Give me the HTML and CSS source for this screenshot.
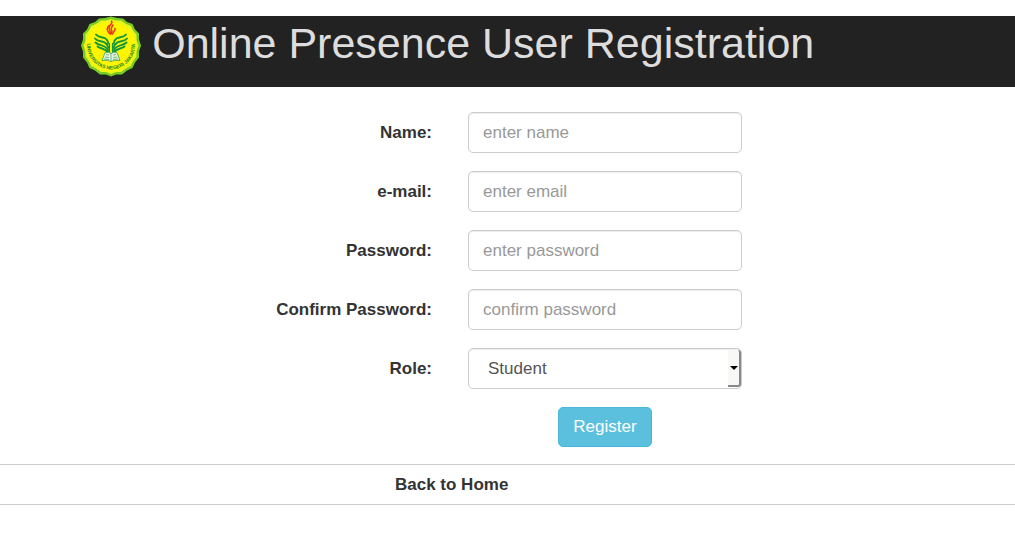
FILE: index.html
```html
<!DOCTYPE html>
<html lang="en">
<head>
<meta charset="utf-8">
<title>Online Presence User Registration</title>
<link rel="stylesheet" href="styles.css">
</head>
<body>
<header class="banner">
  <svg class="logo" viewBox="0 0 60 60" role="img" aria-label="Universitas Negeri Jakarta">
    <path d="M30 0 36 1.500 42 2 46 5.500 51.500 7.500 54 13 58 17 58 23 60 29 58 35 58 41 54 46 51.500 51.500 46 54 41 58 35 58 30 60 25 58 19 58 14 54 8.500 51.500 6 46 2 41 2 35 0 29 2 23 2 17 6 13 8.500 7.500 14 5.500 18 2 24 1.500Z" fill="#79cf25"/>
    <path d="M30 2 35 3.500 40 3.500 45 7 50 9 52.500 14 56 18 56 24 58 29 56 35 56 40 52.500 45 50 50 45 52.500 40 56 35 56 30 58 25 56 20 56 15 52.500 10 50 7.500 45 4 40 4 35 2 29 4 24 4 18 7.500 14 10 9 15 7 20 3.500 25 3.500Z" fill="#e6f51c" stroke="#55b51e" stroke-width=".6"/>
    <circle cx="30" cy="30" r="25" fill="#fff500"/>
    <g fill="none" stroke="#e9321c" stroke-width="1.500" stroke-linecap="round">
      <path d="M30.500 4.500c2 3-3 4-2.500 7 .2 2 1.500 3 1.500 6"/>
      <path d="M28 9c-3 3-2 5 .5 8"/>
      <path d="M32 8.500c-2 3-2.500 4-1 6 0 1-.5 2-1 3"/>
      <path d="M34 12c.5 2-1.500 3-2.500 5.500"/>
    </g>
    <g fill="none" stroke="#12983c" stroke-width="1.900" stroke-linecap="round">
      <path d="M15 18c4 5 10 0 12.500 9M14 22c4 5 10 0 13.500 9M14.500 26c4 4 9 1 13 8M16.500 30c4 3 7 1 10.500 6"/>
      <path d="M45 18c-4 5-10 0-12.500 9M46 22c-4 5-10 0-13.500 9M45.500 26c-4 4-9 1-13 8M43.500 30c-4 3-7 1-10.500 6"/>
      <path d="M28.500 27v9M31.500 27v9" stroke-width="1.100"/>
    </g>
    <path d="M24 36q4-1 6 1 2-2 6-1l3 8q-6-1-9 1-3-2-9-1Z" fill="#e4f5df" stroke="#27914f" stroke-width=".7"/>
    <path d="M30 37v8M25 38l3 .5M24 40.500l4 .5M35 38l-3 .5M36 40.500l-4 .5M23 42.500l5 .5M37 42.500l-5 .5" stroke="#27914f" stroke-width=".6"/>
    <path id="logo-arc" d="M6.500 24A24 24 0 1 0 53.500 24" fill="none"/>
    <text class="logo-text"><textPath href="#logo-arc" startOffset="50%">UNIVERSITAS NEGERI JAKARTA</textPath></text>
  </svg>
  <h1 class="title">Online Presence User Registration</h1>
</header>
<main>
  <form class="form">
    <label class="label" for="name">Name:</label>
    <input class="control" id="name" type="text" placeholder="enter name">
    <label class="label" for="email">e-mail:</label>
    <input class="control" id="email" type="email" placeholder="enter email">
    <label class="label" for="password">Password:</label>
    <input class="control" id="password" type="password" placeholder="enter password">
    <label class="label" for="confirm">Confirm Password:</label>
    <input class="control" id="confirm" type="password" placeholder="confirm password">
    <label class="label" for="role">Role:</label>
    <div class="select-wrap">
      <select class="control select" id="role"><option>Student</option></select>
      <span class="arrow"></span>
    </div>
    <button class="register" type="button">Register</button>
  </form>
</main>
<footer class="footer"><a class="home" href="#">Back to Home</a></footer>
</body>
</html>
```
FILE: styles.css
```css
* { box-sizing: border-box; }
body {
  margin: 0;
  padding-top: 16px;
  background: #fff;
  color: #333;
  font: 17px/24px "Liberation Sans", Arial, sans-serif;
}
.banner {
  display: flex;
  align-items: flex-start;
  gap: 11px;
  padding: 0 0 10px 8%;
  background: #222;
}
.logo { flex: none; width: 60px; height: 61px; }
.logo-text {
  font: bold 5px "Liberation Sans", Arial, sans-serif;
  fill: #168c38;
  text-anchor: middle;
}
.title {
  margin: 0;
  padding-top: 2px;
  color: #ddd;
  font-size: 43px;
  font-weight: 400;
  line-height: 50px;
  white-space: nowrap;
}
.form {
  display: grid;
  grid-template-columns: 432fr 274fr 237fr;
  gap: 18px 36px;
  align-items: center;
  padding: 25px 0 17px;
}
.label { grid-column: 1; text-align: right; font-weight: 700; }
.control {
  display: block;
  grid-column: 2;
  width: 100%;
  height: 41px;
  padding: 0 14px;
  border: 1px solid #ccc;
  border-radius: 5px;
  background: #fff;
  box-shadow: inset 0 1px 1px rgba(0, 0, 0, .075);
  color: #555;
  font: inherit;
}
.control::placeholder { color: #999; opacity: 1; }
.select-wrap { position: relative; grid-column: 2; }
.select { appearance: none; padding-left: 19px; }
.arrow {
  position: absolute;
  top: 2px;
  right: 1px;
  bottom: 2px;
  width: 13px;
  border: solid #888;
  border-width: 0 2px 2px 0;
  border-radius: 0 3px 3px 0;
  background: #f8f8f6;
  pointer-events: none;
}
.arrow::after {
  content: "";
  position: absolute;
  top: 16px;
  right: 1px;
  border: solid transparent;
  border-width: 4px 4px 0;
  border-top-color: #000;
}
.register {
  grid-column: 2;
  justify-self: center;
  height: 40px;
  padding: 0 14px;
  border: 1px solid #46b8da;
  border-radius: 5px;
  background: #5bc0de;
  color: #fff;
  font: inherit;
}
.footer {
  padding: 8px 11% 7px 0;
  border: solid #ccc;
  border-width: 1px 0;
  text-align: center;
}
.home { color: #333; font-weight: 700; text-decoration: none; }
```
